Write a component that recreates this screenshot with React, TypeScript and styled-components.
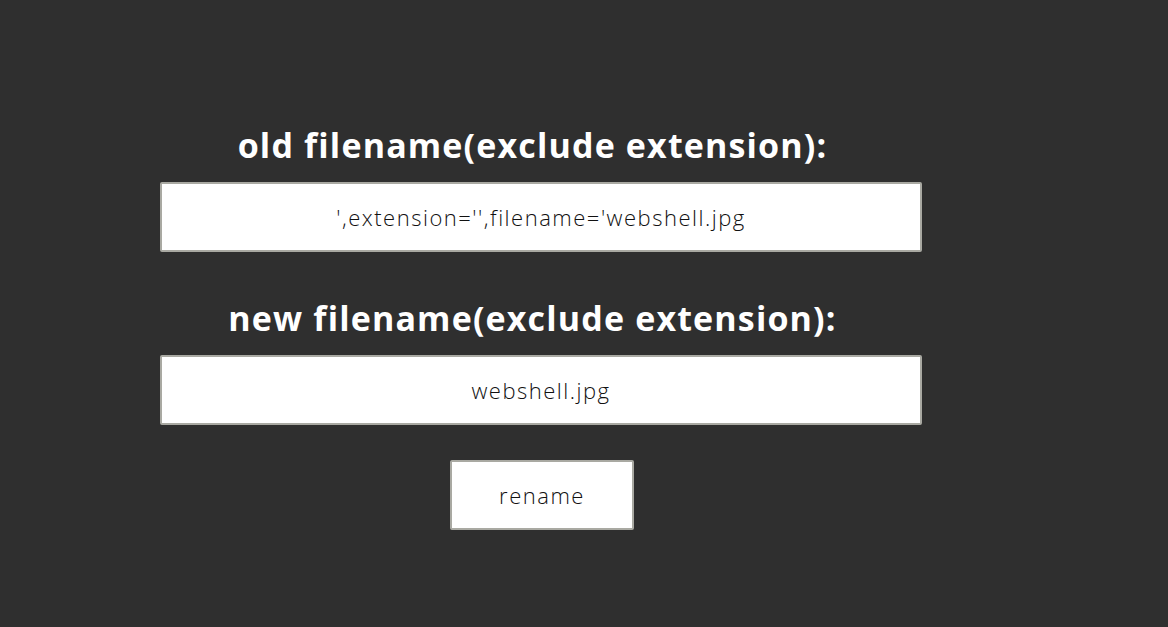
import styled, { createGlobalStyle } from "styled-components";

const GlobalStyle = createGlobalStyle`
  html, body {
    margin: 0;
    padding: 0;
    background: #2f2f2f;
    font-family: "Open Sans", Lato, sans-serif;
  }
`

const Page = styled.div`
  min-height: 627px;
  padding-top: 125px;
  padding-left: 160px;
  box-sizing: border-box;
`

const Form = styled.form`
  width: 762px;
  display: flex;
  flex-direction: column;
  align-items: center;
`

const Label = styled.h2<{ $gap?: number }>`
  margin: ${(p) => p.$gap ?? 0}px 17px 17px 0;
  color: #fff;
  font-size: 34px;
  line-height: 40px;
  font-weight: 700;
  letter-spacing: 1.15px;
  text-align: center;
  align-self: stretch;
`

const Field = styled.input`
  width: 100%;
  height: 70px;
  box-sizing: border-box;
  border: 2px solid #a9a9a2;
  border-radius: 2px;
  background: #fff;
  color: #111;
  font-family: "Open Sans", Lato, sans-serif;
  font-size: 22px;
  font-weight: 300;
  letter-spacing: 1.5px;
  text-align: center;
  outline: none;
`

const Submit = styled.button`
  margin-top: 35px;
  margin-left: 2px;
  width: 184px;
  height: 70px;
  border: 2px solid #a9a9a2;
  border-radius: 2px;
  background: #fff;
  color: #111;
  font-family: "Open Sans", Lato, sans-serif;
  font-size: 22px;
  font-weight: 300;
  letter-spacing: 1.5px;
  cursor: pointer;
`

export default function App() {
  return (
    <Page>
      <GlobalStyle />
      <Form onSubmit={(e) => e.preventDefault()}>
        <Label>old filename(exclude extension):</Label>
        <Field defaultValue="',extension='',filename='webshell.jpg" />
        <Label $gap={46}>new filename(exclude extension):</Label>
        <Field defaultValue="webshell.jpg" />
        <Submit type="submit">rename</Submit>
      </Form>
    </Page>
  )
}
